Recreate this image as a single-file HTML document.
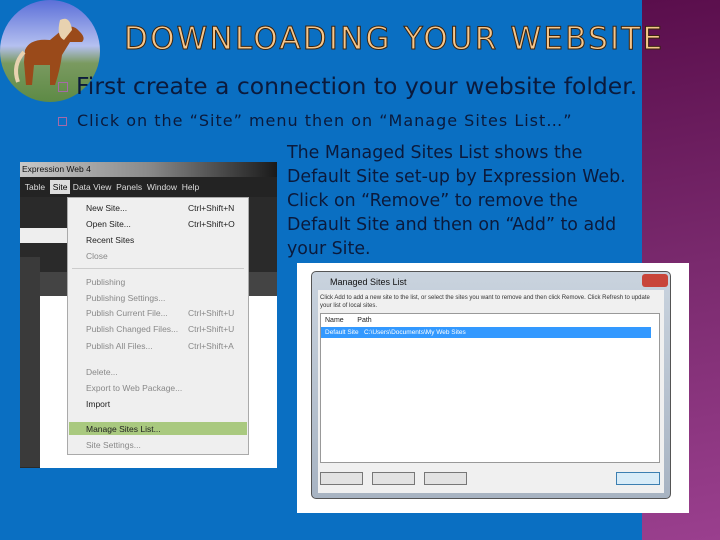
<!DOCTYPE html>
<html><head><style>
*{margin:0;padding:0;box-sizing:border-box}
body{width:720px;height:540px;overflow:hidden;background:#0a6fc2;font-family:"DejaVu Sans","Liberation Sans",sans-serif;position:relative}
.purple{position:absolute;left:642px;top:0;width:78px;height:540px;background:linear-gradient(170deg,#5a0e4c 0%,#7a2a6e 50%,#9a3f8e 100%)}
.abs{position:absolute}
.title{left:124px;top:21px;font-size:31px;letter-spacing:2.2px;color:#f6c68a;-webkit-text-stroke:1px #3a2410;white-space:nowrap;font-family:"DejaVu Sans",sans-serif}
.t1{left:76px;top:72px;font-size:23.5px;color:#0b1a3c;white-space:nowrap}
.t2{left:77px;top:111px;font-size:16px;color:#0b1a3c;white-space:nowrap;letter-spacing:1px}
.bul{width:10px;height:10px;border:1px solid #a56aa8}
.t3{left:287px;top:141px;font-size:17.4px;line-height:24px;color:#0b1a3c;white-space:nowrap}
.menu{font-family:"Liberation Sans",sans-serif;font-size:8.5px}
.mi{position:absolute;left:18px;white-space:nowrap}
.ms{position:absolute;left:120px;white-space:nowrap}
.g{color:#888}
</style></head><body>
<div class="purple"></div>
<div class="abs" style="left:0;top:0;width:100px;height:102px;border-radius:50%;overflow:hidden;background:linear-gradient(#5b6fd8 0%,#b5c0f0 45%,#7a9a60 62%,#5d8a45 100%)">
<svg width="100" height="102"><path d="M25 50 Q30 38 50 40 L62 30 Q72 22 80 32 Q86 38 82 42 L70 42 L62 55 Q60 70 55 85 L50 85 L50 65 L34 65 L32 85 L26 85 L24 62 Z" fill="#9a4a1a"/><path d="M60 20 Q70 15 72 30 L64 40 Q56 36 60 20Z" fill="#e8d2b0"/><path d="M24 52 Q12 65 18 82" stroke="#e8d2b0" stroke-width="4" fill="none"/></svg>
</div>
<div class="abs title">DOWNLOADING YOUR WEBSITE</div>
<div class="abs bul" style="left:58px;top:82px"></div>
<div class="abs t1">First create a connection to your website folder.</div>
<div class="abs bul" style="left:58px;top:117px;width:9px;height:9px"></div>
<div class="abs t2">Click on the “Site” menu then on “Manage Sites List…”</div>
<div class="abs t3">The Managed Sites List shows the<br>Default Site set-up by Expression Web.<br>Click on “Remove” to remove the<br>Default Site and then on “Add” to add<br>your Site.</div>
<div class="abs menu" style="left:20px;top:162px;width:257px;height:306px;background:#2a2a2a;overflow:hidden">
 <div class="abs" style="left:0;top:0;width:257px;height:15px;background:linear-gradient(90deg,#c8c8c8,#8a8a8a 50%,#1a1a1a)"><span style="padding-left:2px;color:#111;line-height:15px">Expression Web 4</span></div>
 <div class="abs" style="left:0;top:15px;width:257px;height:20px;background:#232323;color:#ddd;line-height:20px;white-space:nowrap">&nbsp;&nbsp;Table&nbsp;&nbsp;<span style="background:#ddd;color:#000;padding:2px 3px">Site</span>&nbsp;Data View&nbsp;&nbsp;Panels&nbsp;&nbsp;Window&nbsp;&nbsp;Help</div>
 <div class="abs" style="left:0;top:66px;width:50px;height:15px;background:#eee"></div>
 <div class="abs" style="left:0;top:95px;width:20px;height:210px;background:#3a3a3a"></div>
 <div class="abs" style="left:20px;top:110px;width:237px;height:24px;background:#444"></div>
 <div class="abs" style="left:20px;top:134px;width:237px;height:172px;background:#fff"></div>
 <div class="abs" style="left:47px;top:35px;width:182px;height:258px;background:#efefef;border:1px solid #aaa;color:#222">
  <div class="mi" style="top:5px">New Site...</div><div class="ms" style="top:5px">Ctrl+Shift+N</div>
  <div class="mi" style="top:21px">Open Site...</div><div class="ms" style="top:21px">Ctrl+Shift+O</div>
  <div class="mi" style="top:37px">Recent Sites</div>
  <div class="mi g" style="top:53px">Close</div>
  <div style="position:absolute;left:4px;top:70px;width:172px;height:1px;background:#ccc"></div>
  <div class="mi g" style="top:79px">Publishing</div>
  <div class="mi g" style="top:95px">Publishing Settings...</div>
  <div class="mi g" style="top:110px">Publish Current File...</div><div class="ms g" style="top:110px">Ctrl+Shift+U</div>
  <div class="mi g" style="top:126px">Publish Changed Files...</div><div class="ms g" style="top:126px">Ctrl+Shift+U</div>
  <div class="mi g" style="top:143px">Publish All Files...</div><div class="ms g" style="top:143px">Ctrl+Shift+A</div>
  <div class="mi g" style="top:169px">Delete...</div>
  <div class="mi g" style="top:185px">Export to Web Package...</div>
  <div class="mi" style="top:201px">Import</div>
  <div style="position:absolute;left:1px;top:224px;width:178px;height:13px;background:#a9c97f"></div>
  <div class="mi" style="top:226px">Manage Sites List...</div>
  <div class="mi g" style="top:242px">Site Settings...</div>
 </div>
</div>
<div class="abs menu" style="left:297px;top:263px;width:392px;height:250px;background:#fff">
 <div class="abs" style="left:14px;top:8px;width:360px;height:228px;background:linear-gradient(#c9d3de,#a7b3c2);border:1px solid #555;border-radius:5px">
  <div class="abs" style="left:18px;top:5px;color:#111;font-size:9px">Managed Sites List</div>
  <div class="abs" style="left:330px;top:2px;width:26px;height:13px;background:#c8453a;border-radius:3px"></div>
  <div class="abs" style="left:6px;top:18px;width:346px;height:203px;background:#f0f0f0">
   <div style="font-size:6px;color:#333;padding:4px 2px;line-height:8px">Click Add to add a new site to the list, or select the sites you want to remove and then click Remove. Click Refresh to update your list of local sites.</div>
   <div class="abs" style="left:2px;top:23px;width:340px;height:150px;background:#fff;border:1px solid #999">
    <div style="height:13px;font-size:7px;line-height:13px;color:#222;padding-left:4px">Name&nbsp;&nbsp;&nbsp;&nbsp;&nbsp;&nbsp;&nbsp;Path</div>
    <div style="height:11px;background:#3399ff;color:#fff;font-size:6.5px;line-height:11px;padding-left:4px;margin-right:8px;white-space:nowrap">Default Site&nbsp;&nbsp;&nbsp;C:\Users\Documents\My Web Sites</div>
   </div>
   <div class="abs" style="left:2px;top:182px;width:43px;height:13px;background:#e2e2e2;border:1px solid #777"></div>
   <div class="abs" style="left:54px;top:182px;width:43px;height:13px;background:#e2e2e2;border:1px solid #777"></div>
   <div class="abs" style="left:106px;top:182px;width:43px;height:13px;background:#e2e2e2;border:1px solid #777"></div>
   <div class="abs" style="left:298px;top:182px;width:44px;height:13px;background:#d8ecf8;border:1px solid #3c7fb1"></div>
  </div>
 </div>
</div>
</body></html>
